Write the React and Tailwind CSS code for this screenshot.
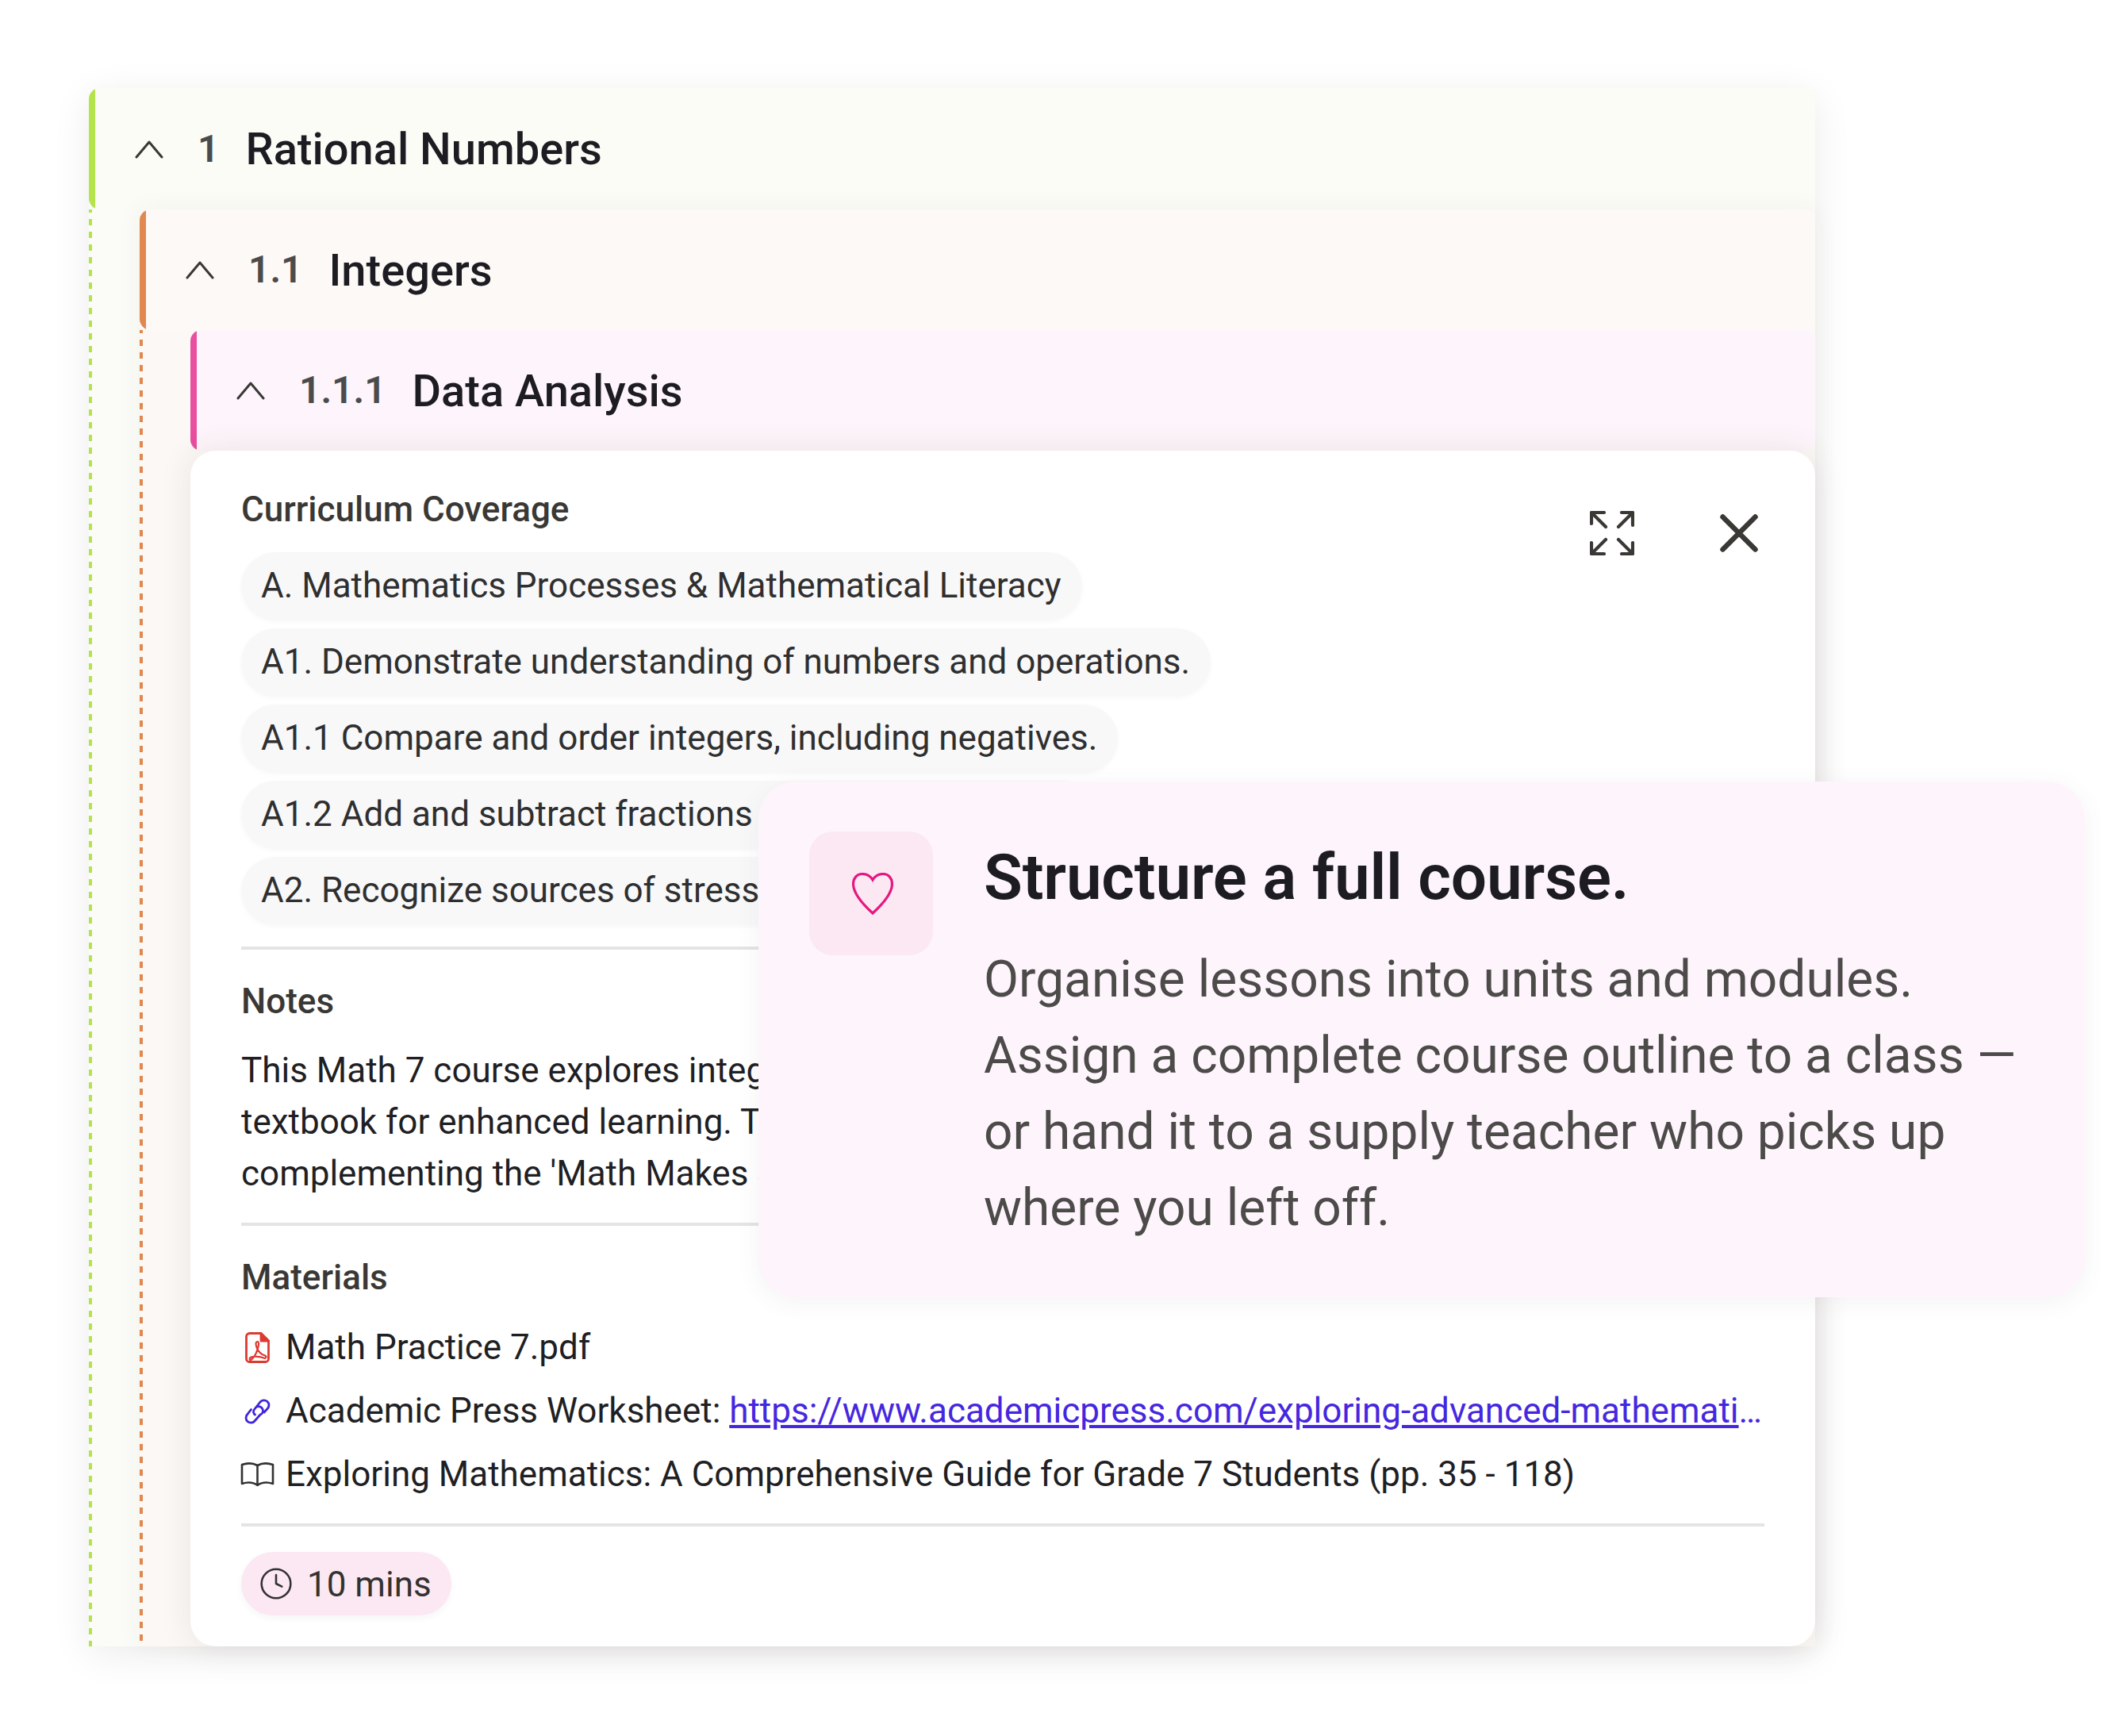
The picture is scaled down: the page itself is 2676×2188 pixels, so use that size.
import React from 'react';
import { Clock } from 'lucide-react';

const Chevron = () => (
  <svg width="36" height="26" viewBox="0 0 36 26" fill="none" stroke="#3a3835" strokeWidth="3" strokeLinecap="round" strokeLinejoin="round" className="shrink-0">
    <polyline points="2,23 18,4 34,23" />
  </svg>
);

const Header = ({ num, title, bar, bg, height }) => (
  <div className={`flex shrink-0 overflow-hidden rounded-[14px] ${height} ${bg}`}>
    <div className={`w-[8px] shrink-0 ${bar}`} />
    <div className="flex items-center pl-[50px]">
      <Chevron />
      <span className="ml-[43px] text-[48px] font-semibold text-[#4b4b4b]">{num}</span>
      <span className="ml-[33px] mt-[1px] text-[56px] font-medium text-[#1c1c22]">{title}</span>
    </div>
  </div>
);

const Chip = ({ children }) => (
  <div className="flex h-[86px] w-fit max-w-[1900px] items-center whitespace-nowrap rounded-full bg-[#f8f8f9] pb-[3px] pl-[25px] pr-[26px] text-[44px] text-[#2f2f2f] shadow-[0_2px_6px_rgba(0,0,0,0.03)]">
    {children}
  </div>
);

const Label = ({ children, className }) => (
  <div className={`text-[44px] font-medium leading-[60px] text-[#3a3835] ${className}`}>{children}</div>
);

const Divider = ({ className }) => <div className={`h-[4px] bg-[#e4e4e4] ${className}`} />;

const PdfIcon = () => (
  <svg width="31" height="39" viewBox="0 0 31 39" fill="none" stroke="#dc3a32" strokeWidth="2.800" strokeLinejoin="round">
    <path d="M5.500 1.500H20L29.500 11V33.500a4 4 0 0 1-4 4H5.500a4 4 0 0 1-4-4V5.500a4 4 0 0 1 4-4z" />
    <path d="M20 1.500L29.500 11H20z" fill="#dc3a32" />
    <path d="M15.500 12C13 12 13 16 15 20.500C17 25 20 28 25 29.500C28 31 26 33.500 23.500 32.500C19 31 11 30 7.500 31.500C4.500 33 5.500 36.500 8 34.500C11.500 32 16 24 17 16C17.500 13 16.500 12 15.500 12Z" strokeWidth="2.200" />
  </svg>
);

const LinkIcon = () => (
  <svg width="33" height="33" viewBox="0 0 33 33" fill="none" stroke="#3f25dc" strokeWidth="2.800" strokeLinecap="round" strokeLinejoin="round">
    <path d="M13.500 21a4.500 4.500 0 0 1-1-6.500L20 5a6.200 6.200 0 0 1 9.500 8L25 18" />
    <path d="M8.500 14.500L3.500 21a6.200 6.200 0 0 0 9.500 8L20 21a4.500 4.500 0 0 0-4-10" />
  </svg>
);

const BookIcon = () => (
  <svg width="43" height="31" viewBox="0 0 43 31" fill="none" stroke="#333230" strokeWidth="2.600" strokeLinejoin="round" className="shrink-0">
    <path d="M21.500 4C16 1 8 1 2 3V27C8 25 16 25 21.500 29C27 25 35 25 41 27V3C35 1 27 1 21.500 4Z" />
    <path d="M21.500 4V29" />
  </svg>
);

const ExpandIcon = () => (
  <svg width="56" height="56" viewBox="0 0 56 56" fill="none" stroke="#3a3835" strokeWidth="4.200" strokeLinecap="round" strokeLinejoin="round">
    <path d="M2 16V2h16M2 2l18 18" />
    <path d="M40 2h14v16M54 2L36 20" />
    <path d="M2 40v14h16M2 54l18-18" />
    <path d="M54 40v14H40M54 54L36 36" />
  </svg>
);

const CloseIcon = () => (
  <svg width="48" height="48" viewBox="0 0 48 48" fill="none" stroke="#3a3835" strokeWidth="6.500" strokeLinecap="round">
    <path d="M3.500 3.500l41 41M44.500 3.500l-41 41" />
  </svg>
);

const Row = ({ icon, children }) => (
  <div className="flex h-[80px] items-center gap-[16px] text-[44px] text-[#1f1f24]">
    <div className="flex w-[40px] shrink-0 justify-center">{icon}</div>
    {children}
  </div>
);

export default function App() {
  return (
    <div className="relative h-[2188px] w-[2676px] overflow-hidden bg-white pl-[112px] pt-[111px] font-['Roboto',sans-serif]">
      <div className="flex h-[1964px] w-[2176px] flex-col rounded-t-[14px] bg-[#fbfcf7] shadow-[0_10px_50px_rgba(0,0,0,0.08)]">
        <Header num="1" title="Rational Numbers" bar="bg-[#b5e34c]" bg="bg-[#fbfcf6]" height="h-[153px]" />
        <div className="flex min-h-0 flex-1">
          <div className="w-[4px] shrink-0 bg-[repeating-linear-gradient(to_bottom,#b5e34c_0,#b5e34c_4px,transparent_4px,transparent_12px,#b5e34c_12px,#b5e34c_16px)]" />
          <div className="flex min-w-0 flex-1 flex-col pl-[60px]">
            <div className="flex min-h-0 flex-1 flex-col bg-[#fbf8f5] shadow-[0_0_30px_rgba(60,50,30,0.05)]">
              <Header num="1.1" title="Integers" bar="bg-[#e08850]" bg="bg-[#fcf9f6]" height="h-[152px]" />
              <div className="flex min-h-0 flex-1">
                <div className="w-[4px] shrink-0 bg-[repeating-linear-gradient(to_bottom,#e08850_0,#e08850_4px,transparent_4px,transparent_12px,#e08850_12px,#e08850_16px)]" />
                <div className="flex min-w-0 flex-1 flex-col pl-[60px]">
                  <Header num="1.1.1" title="Data Analysis" bar="bg-[#e84f9f]" bg="bg-[#fdf5fb]" height="h-[152px]" />
                  <div className="min-h-0 flex-1 rounded-[32px] bg-white px-[64px] pt-[44px] shadow-[0_0_40px_rgba(90,60,40,0.1)]">
                    <div className="flex justify-between">
                      <div>
                        <Label className="mb-[24px]">Curriculum Coverage</Label>
                        <div className="flex flex-col gap-[10px]">
                          <Chip>A. Mathematics Processes &amp; Mathematical Literacy</Chip>
                          <Chip>A1. Demonstrate understanding of numbers and operations.</Chip>
                          <Chip>A1.1 Compare and order integers, including negatives.</Chip>
                          <Chip>A1.2 Add and subtract fractions and mixed numbers.</Chip>
                          <Chip>A2. Recognize sources of stress in everyday problems.</Chip>
                        </div>
                      </div>
                      <div className="flex items-center gap-[108px] self-start pr-[8px] pt-[32px]">
                        <ExpandIcon />
                        <CloseIcon />
                      </div>
                    </div>

                    <Divider className="mt-[27px]" />
                    <Label className="mt-[35px]">Notes</Label>
                    <div className="mt-[25px] whitespace-nowrap text-[44px] leading-[65px] text-[#1f1f24]">
                      <div>This Math 7 course explores integers, fractions and data analysis with a</div>
                      <div>textbook for enhanced learning. The units build on one another,</div>
                      <div>complementing the 'Math Makes Sense' series.</div>
                    </div>

                    <Divider className="mt-[29px]" />
                    <Label className="mt-[35px]">Materials</Label>
                    <div className="mt-[18px]">
                      <Row icon={<PdfIcon />}>Math Practice 7.pdf</Row>
                      <Row icon={<LinkIcon />}>
                        <span className="shrink-0 whitespace-pre">Academic Press Worksheet: </span>
                        <a href="#" className="-ml-[16px] min-w-0 truncate text-[#4527e0] underline">https://www.academicpress.com/exploring-advanced-mathematics-grade-7-worksheets</a>
                      </Row>
                      <Row icon={<BookIcon />}>Exploring Mathematics: A Comprehensive Guide for Grade 7 Students (pp. 35 - 118)</Row>
                    </div>

                    <Divider className="mt-[22px]" />
                    <div className="mt-[32px] flex h-[80px] w-fit items-center gap-[17px] rounded-full bg-[#fbe8f3] pl-[22px] pr-[25px] text-[44px] text-[#333230] shadow-[0_4px_10px_rgba(0,0,0,0.04)]">
                      <Clock size={44} strokeWidth={1.4} />
                      <span className="pt-[2px]">10 mins</span>
                    </div>
                  </div>
                </div>
              </div>
            </div>
          </div>
        </div>
      </div>

      <div className="absolute left-[956px] top-[985px] flex h-[650px] w-[1672px] gap-[64px] rounded-[48px] bg-[#fdf5fb] pl-[64px] pt-[73px] shadow-[0_6px_30px_rgba(120,80,100,0.07)]">
        <div className="-mt-[10px] flex h-[156px] w-[156px] shrink-0 items-center justify-center rounded-[30px] bg-[#fbe8f3] pl-[3px]">
          <svg width="52" height="53" viewBox="0 0 52 53" fill="none" stroke="#e5187f" strokeWidth="3.200">
            <path d="M26 9C23 4 18 1.500 13 1.500C6 1.500 1.500 7 1.500 14C1.500 27 15 41 26 51C37 41 50.500 27 50.500 14C50.500 7 46 1.500 39 1.500C34 1.500 29 4 26 9Z" />
          </svg>
        </div>
        <div>
          <div className="text-[80px] font-semibold leading-[96px] tracking-[-0.2px] text-[#1c1c22]">Structure a full course.</div>
          <div className="mt-[33px] text-[64px] leading-[96px] text-[#4d4a4a]">
            <div>Organise lessons into units and modules.</div>
            <div>Assign a complete course outline to a class —</div>
            <div>or hand it to a supply teacher who picks up</div>
            <div>where you left off.</div>
          </div>
        </div>
      </div>
    </div>
  );
}
